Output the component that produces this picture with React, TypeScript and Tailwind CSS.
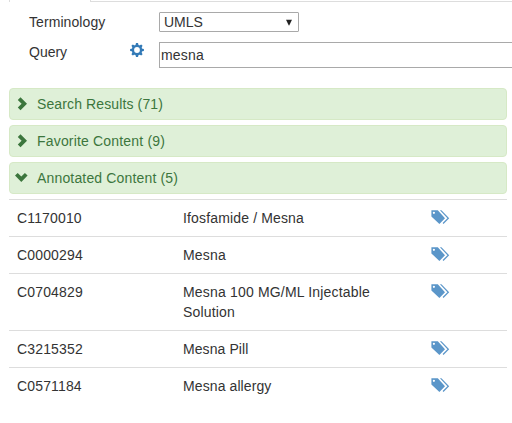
import React from "react";

const ROWS = [
  { code: "C1170010", name: "Ifosfamide / Mesna", tracking: "tracking-[0.15px]" },
  { code: "C0000294", name: "Mesna", tracking: "tracking-[0.2px]" },
  { code: "C0704829", name: "Mesna 100 MG/ML Injectable Solution", tracking: "tracking-[0.18px]" },
  { code: "C3215352", name: "Mesna Pill", tracking: "tracking-[0.08px]" },
  { code: "C0571184", name: "Mesna allergy", tracking: "tracking-[0.1px]" },
];

function Cog() {
  return (
    <svg width="14" height="14" viewBox="-7 -7 14 14" fill="#337ab7" aria-hidden="true">
      {[0, 45, 90, 135].map((angle) => (
        <path key={angle} d="M-1 -6.9H1L1.6 -4.5V4.5L1 6.9H-1L-1.6 4.5V-4.5Z" transform={`rotate(${angle})`} />
      ))}
      <circle r="5.2" />
      <circle r="2.9" fill="#fff" />
    </svg>
  );
}

function Chevron({ open }: { open: boolean }) {
  return (
    <svg width="14" height="14" viewBox="0 0 14 14" fill="#3c763d" className="mr-2 shrink-0" aria-hidden="true">
      {open ? (
        <path d="M0 4.6 2.7 1.9 6.3 5.5 9.9 1.9 12.6 4.6 6.3 10.9Z" />
      ) : (
        <path d="M2.8 2.9 5.5 0.2 12 6.7 5.5 13.2 2.8 10.5 6.6 6.7Z" />
      )}
    </svg>
  );
}

function Tags() {
  return (
    <svg width="19" height="15" viewBox="0 0 19 15" fill="#5b96c9" aria-hidden="true">
      <path fillRule="evenodd" d="M0.4 0.2H6.8L14 8.2 8.4 14 0.4 6.4ZM2.9 1.7A1.1 1.1 0 0 0 2.9 3.9 1.1 1.1 0 0 0 2.9 1.7Z" />
      <path d="M8.9 0.2H10.4L18.2 8.2 12.5 14 11.6 13.1 16.4 8.2Z" />
    </svg>
  );
}

function Section({ title, tracking, open = false }: { title: string; tracking: string; open?: boolean }) {
  return (
    <div className="flex h-8 items-center rounded border border-[#d6e9c6] bg-[#dff0d8] pl-[5px] text-[#3c763d]">
      <Chevron open={open} />
      <span className={tracking}>{title}</span>
    </div>
  );
}

export default function App() {
  return (
    <div className="h-[423px] w-[512px] overflow-hidden bg-white font-['Liberation_Sans',Arial,sans-serif] text-[14px] leading-5 text-[#333]">
      <div className="flex h-3 items-start">
        <div className="ml-[9px] h-0.5 w-[82px] border-x border-[#ddd]" />
        <div className="h-0.5 flex-1 border-b border-[#ddd]" />
      </div>
      <div className="flex h-[30px] pl-[29px]">
        <label className="w-[130px] shrink-0 tracking-[0.08px]">Terminology</label>
        <div className="flex h-5 w-[140px] items-center justify-between rounded-[1px] border border-[#a9a9a9] pl-1 pr-[5px]">
          <span>UMLS</span>
          <svg width="8" height="7" viewBox="0 0 8 7" fill="#222" aria-hidden="true">
            <path d="M1 0.8H7L4.2 6.5H3.8Z" />
          </svg>
        </div>
      </div>
      <div className="flex h-[46px] pl-[29px]">
        <label className="w-[101px] shrink-0">Query</label>
        <div className="w-[29px] shrink-0 pt-[1px]"><Cog /></div>
        <div className="flex h-[26px] w-[370px] shrink-0 items-center border border-[#a9a9a9] pl-px tracking-[0.2px]">mesna</div>
      </div>
      <div className="ml-[9px] flex w-[498px] flex-col gap-[5px]">
        <Section title="Search Results (71)" tracking="tracking-[0.12px]" />
        <Section title="Favorite Content (9)" tracking="tracking-[0.18px]" />
        <Section title="Annotated Content (5)" tracking="tracking-[0.16px]" open />
        <div>
          {ROWS.map((row) => (
            <div key={row.code} className="flex border-t border-[#ddd] p-2">
              <div className="w-[166px] tracking-[0.15px]">{row.code}</div>
              <div className={`w-[210px] pr-4 ${row.tracking}`}>{row.name}</div>
              <div className="ml-[38px] pt-[2px]"><Tags /></div>
            </div>
          ))}
        </div>
      </div>
    </div>
  );
}
